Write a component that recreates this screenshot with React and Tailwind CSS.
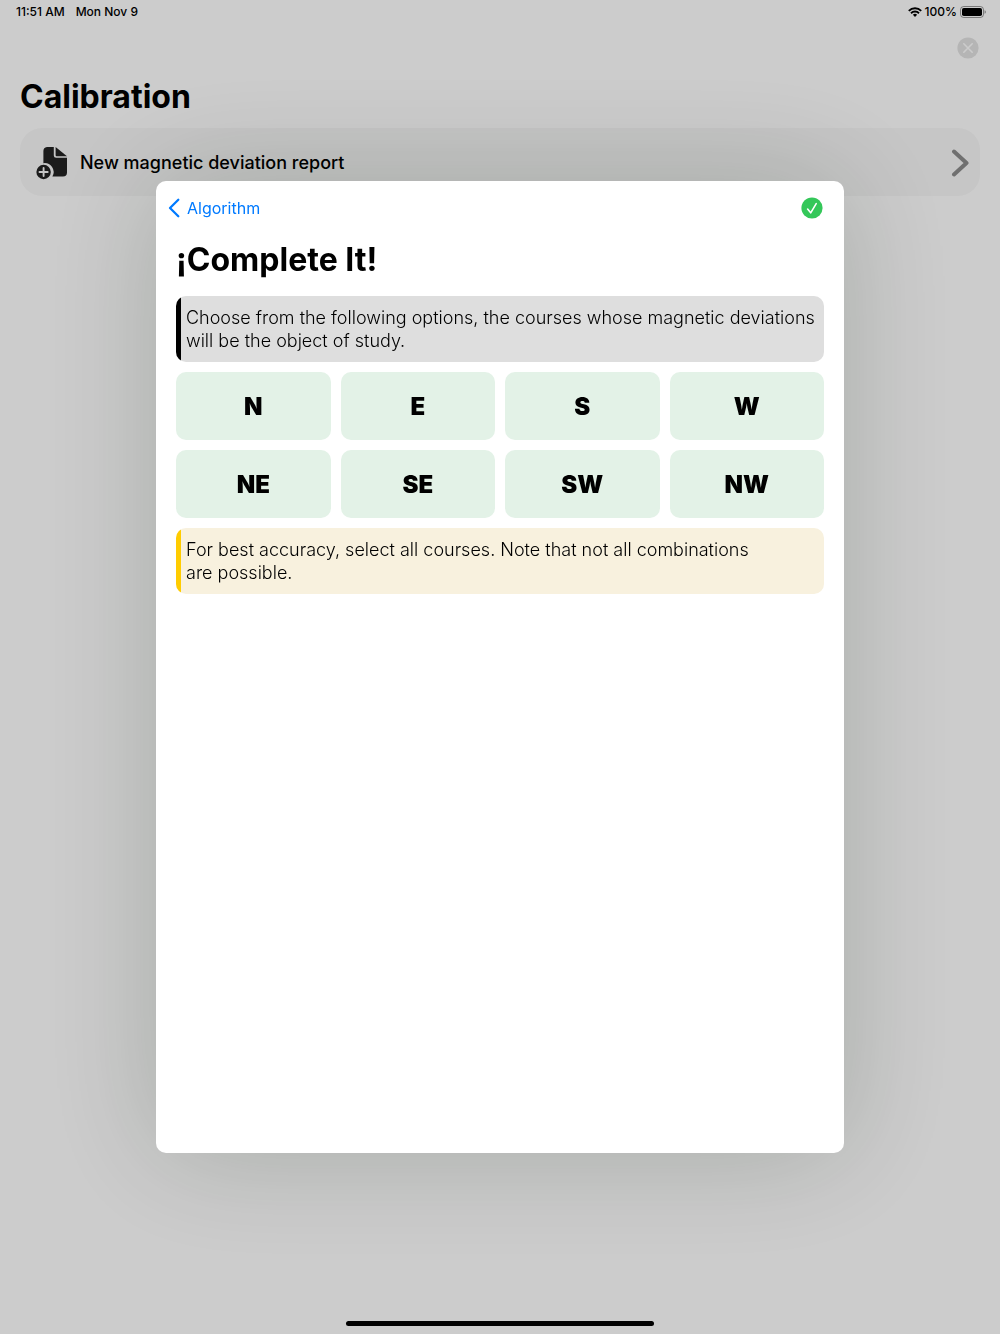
import { useState } from 'react'

const COURSES = ['N', 'E', 'S', 'W', 'NE', 'SE', 'SW', 'NW']

const IconWifi = ({ className }) => (
    <svg className={className} viewBox="0 0 14 10" fill="none" stroke="currentColor" strokeWidth="1.9" aria-hidden="true">
        <path d="M0.8 3.8a8.8 8.8 0 0 1 12.4 0" />
        <path d="M3 6.2a5.7 5.7 0 0 1 8 0" />
        <path d="M7 10L4.9 7.8a3 3 0 0 1 4.2 0z" fill="currentColor" stroke="none" />
    </svg>
)

const IconBattery = ({ className }) => (
    <svg className={className} viewBox="0 0 26 12" aria-hidden="true">
        <rect x="0.5" y="0.5" width="23" height="11" rx="3.2" fill="none" stroke="#000" strokeOpacity="0.4" />
        <rect x="2" y="2" width="20" height="8" rx="1.8" fill="#000" />
        <path d="M24.6 4.2c.8.3 1.2 1 1.2 1.8s-.4 1.5-1.2 1.8z" fill="#000" fillOpacity="0.45" />
    </svg>
)

const IconClose = ({ className }) => (
    <svg className={className} viewBox="0 0 22 22" aria-hidden="true">
        <circle cx="11" cy="11" r="10.6" fill="#e3e3e3" />
        <path d="M6.8 6.8l8.4 8.4M15.2 6.8l-8.4 8.4" stroke="#fff" strokeWidth="1.6" strokeLinecap="round" />
    </svg>
)

const IconReport = ({ className }) => (
    <svg className={className} viewBox="0 0 32 34" fill="currentColor" aria-hidden="true">
        <path d="M11 1h6.8v8.4a2.4 2.4 0 0 0 2.4 2.4H31v14.8a4 4 0 0 1-4 4H16.4a9 9 0 0 0-9-13.4V5A4 4 0 0 1 11 1z" />
        <path d="M19.6 1L31 10.2H20.6a1 1 0 0 1-1-1z" />
        <circle cx="7.6" cy="26" r="7.2" />
        <path d="M7.6 21.9v8.2M3.5 26h8.2" stroke="#f8f8f8" strokeWidth="1.9" strokeLinecap="round" />
    </svg>
)

const IconChevronRight = ({ className }) => (
    <svg className={className} viewBox="0 0 18 28" fill="none" stroke="currentColor" strokeWidth="4" strokeLinecap="round" strokeLinejoin="round" aria-hidden="true">
        <path d="M3 2.5L15.5 14L3 25.5" />
    </svg>
)

const IconBack = ({ className }) => (
    <svg className={className} viewBox="0 0 12 20" fill="none" stroke="currentColor" strokeWidth="2.3" strokeLinecap="round" strokeLinejoin="round" aria-hidden="true">
        <path d="M10.3 1.8L2 10l8.3 8.2" />
    </svg>
)

const IconDone = ({ className }) => (
    <svg className={className} viewBox="0 0 22 22" aria-hidden="true">
        <circle cx="11" cy="11" r="10.6" fill="#34c759" />
        <path d="M6.6 12l3.1 3.8L15.2 6.7" fill="none" stroke="#fff" strokeWidth="1.6" strokeLinecap="round" strokeLinejoin="round" />
    </svg>
)

function Note({ tone, children }) {
    const tones = {
        dark: { box: 'bg-[#dedede]', bar: 'bg-black' },
        warning: { box: 'bg-[#f8f1de]', bar: 'bg-[#ffcc00]' },
    }
    return (
        <div className={`flex overflow-hidden rounded-[10px] ${tones[tone].box}`}>
            <div className={`w-[5px] shrink-0 ${tones[tone].bar}`} />
            <p className="py-[10px] pl-[5px] pr-2 text-lg leading-[23px] font-light">{children}</p>
        </div>
    )
}

export default function App() {
    const [selected, setSelected] = useState([])

    const toggle = (course) => {
        setSelected(selected.includes(course) ? selected.filter(c => c !== course) : [...selected, course])
    }

    return (
        <div className="min-h-screen bg-white text-black font-['Inter','Liberation_Sans',sans-serif]">
            {/* Status bar */}
            <header className="flex h-6 items-center justify-between pl-4 pr-[14px] text-xs font-medium">
                <div className="flex gap-[11px]">
                    <span>11:51 AM</span>
                    <span>Mon Nov 9</span>
                </div>
                <div className="flex items-center gap-[3px]">
                    <IconWifi className="h-[10px] w-[14px]" />
                    <span>100%</span>
                    <IconBattery className="h-3 w-[26px]" />
                </div>
            </header>

            {/* Calibration screen */}
            <main className="px-5">
                <div className="flex h-12 items-center justify-end pr-px">
                    <button type="button" aria-label="Close"><IconClose className="h-[22px] w-[22px]" /></button>
                </div>
                <h1 className="mt-[5px] mb-[11px] text-[32px] leading-10 font-bold">Calibration</h1>
                <button type="button" className="flex h-[68px] w-full items-center rounded-[22px] bg-[#f8f8f8] pt-px pl-4 pr-[11px] text-left">
                    <IconReport className="h-[34px] w-8 text-[#222]" />
                    <span className="ml-3 flex-1 text-lg font-medium">New magnetic deviation report</span>
                    <IconChevronRight className="h-7 w-[18px] text-[#8c8c8c]" />
                </button>
            </main>

            {/* Course selection sheet */}
            <div className="fixed inset-0 flex justify-center bg-black/20 py-[181px]">
                <section role="dialog" aria-labelledby="sheet-title" className="w-full max-w-[688px] overflow-auto rounded-[10px] bg-white px-5 shadow-[0_0_120px_rgba(12,24,8,0.19)]">
                    <nav className="-ml-2 flex h-[54px] items-center justify-between pr-px">
                        <a href="#algorithm" className="flex items-center gap-[7px] text-base text-[#007aff]">
                            <IconBack className="h-5 w-3" />
                            Algorithm
                        </a>
                        <button type="button" aria-label="Done"><IconDone className="h-[22px] w-[22px]" /></button>
                    </nav>
                    <h2 id="sheet-title" className="mt-[5px] mb-4 text-[32px] leading-10 font-bold">¡Complete It!</h2>
                    <div className="flex flex-col gap-[10px]">
                        <Note tone="dark">Choose from the following options, the courses whose magnetic deviations will be the object of study.</Note>
                        <div className="grid grid-cols-4 gap-[10px]">
                            {COURSES.map(course => (
                                <button key={course} type="button" aria-pressed={selected.includes(course)} onClick={() => toggle(course)}
                                    className={`h-[68px] rounded-[10px] pt-px text-2xl font-black cursor-pointer ${selected.includes(course) ? 'bg-[#34c759]' : 'bg-[#e3f2e7]'}`}>
                                    {course}
                                </button>
                            ))}
                        </div>
                        <Note tone="warning">For best accuracy, select all courses. Note that not all combinations are&nbsp;possible.</Note>
                    </div>
                </section>
            </div>

            {/* Home indicator */}
            <div className="fixed inset-x-0 bottom-2 flex justify-center">
                <div className="h-[5px] w-[308px] rounded-full bg-black" />
            </div>
        </div>
    )
}
